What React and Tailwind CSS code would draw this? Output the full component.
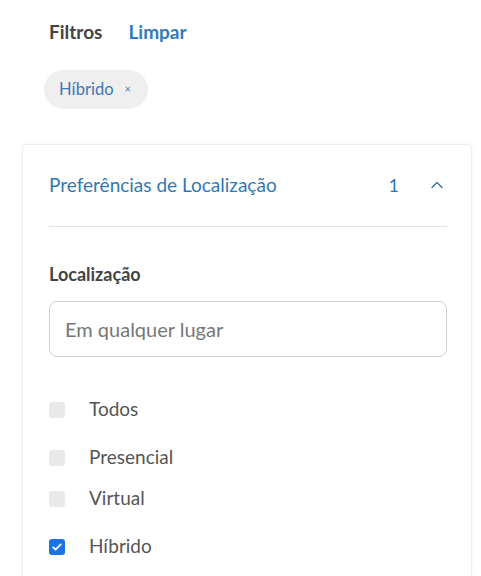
import { ChevronUp } from 'lucide-react'

const options = [
  { label: 'Todos', checked: false, mt: '' },
  { label: 'Presencial', checked: false, mt: 'mt-[24px]' },
  { label: 'Virtual', checked: false, mt: 'mt-[17px]' },
  { label: 'Híbrido', checked: true, mt: 'mt-[24px]' },
]

function Checkbox({ checked }) {
  if (checked) {
    return (
      <span className="flex h-4 w-4 items-center justify-center rounded-[3px] bg-[#1a73e8]">
        <svg viewBox="0 0 16 16" className="h-3 w-3" fill="none">
          <path d="M3 8.5l3 3 7-7" stroke="white" strokeWidth="2.4" strokeLinecap="round" strokeLinejoin="round" />
        </svg>
      </span>
    )
  }
  return <span className="h-4 w-4 rounded-[3px] bg-[#e9e9e9]" />
}

export default function App() {
  return (
    <div className="min-h-[576px] w-[481px] bg-white font-['Lato',sans-serif]">
      <div className="flex items-center gap-[26px] pl-[49px] pt-[18px] text-[19px] font-bold">
        <span className="text-[#444]">Filtros</span>
        <span className="text-[#2f7bbd]">Limpar</span>
      </div>

      <div className="mt-[23px] pl-[44px]">
        <span className="inline-flex h-[39px] items-center gap-[11px] rounded-full bg-[#efefef] pl-[15px] pr-[17px]">
          <span className="text-[16.5px] text-[#3a78b8]">Híbrido</span>
          <span className="text-[11px] text-[#5a7fa8]">×</span>
        </span>
      </div>

      <div className="ml-[22px] mr-[9px] mt-[35px] rounded-t-[4px] border border-b-0 border-[#eeeeee] pl-[26px] pr-[24px] shadow-[0_0_6px_rgba(0,0,0,0.04)]">
        <div className="flex h-[82px] items-center border-b border-[#e3e3e3]">
          <span className="flex-1 text-[19px] text-[#2f7ab5]">Preferências de Localização</span>
          <span className="mr-[28px] text-[18px] text-[#2f7ab5]">1</span>
          <ChevronUp className="h-5 w-5 text-[#2f6f9f]" strokeWidth={1.5} />
        </div>

        <div className="pt-[34px] text-[18px] font-bold text-[#444]">Localização</div>

        <div className="mt-[13px] flex h-[56px] items-center rounded-[8px] border border-[#cfcfcf] px-[15px]">
          <span className="text-[20px] text-[#777]">Em qualquer lugar</span>
        </div>

        <div className="mt-[41px] pb-[18px]">
          {options.map((o) => (
            <div key={o.label} className={`flex h-6 items-center ${o.mt}`}>
              <Checkbox checked={o.checked} />
              <span className="ml-[24px] text-[19px] text-[#555]">{o.label}</span>
            </div>
          ))}
        </div>
      </div>
    </div>
  )
}
